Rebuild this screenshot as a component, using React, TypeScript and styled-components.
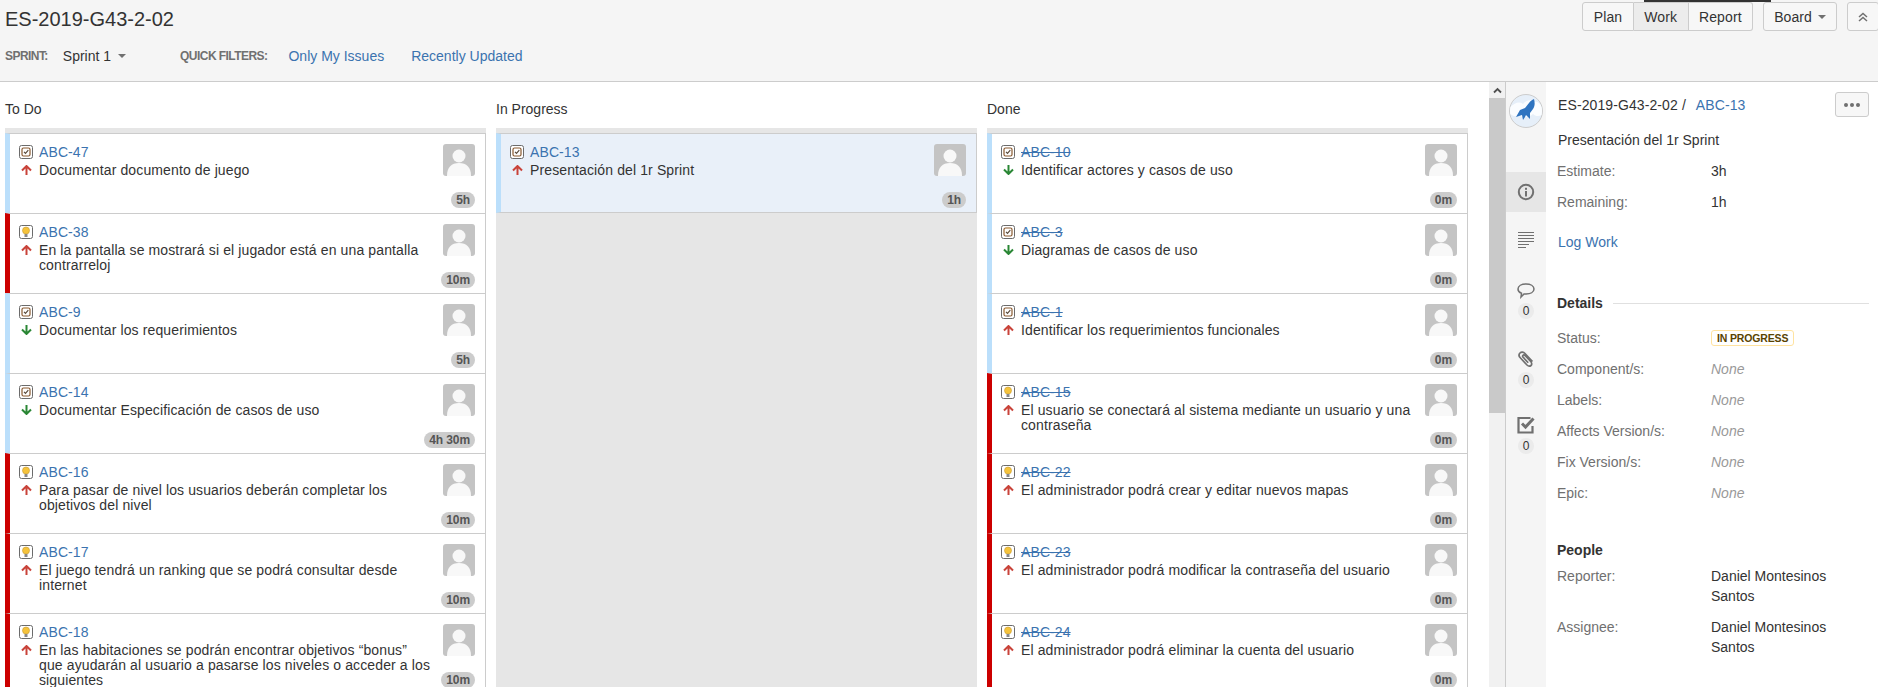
import React from "react";
import styled, { createGlobalStyle } from "styled-components";

const Global = createGlobalStyle`
  html, body { margin: 0; padding: 0; height: 100%; overflow: hidden; background: #fff; }
  body { font-family: "Liberation Sans", Arial, sans-serif; font-size: 14px; color: #333; }
  #root { height: 100%; }
`;

const Page = styled.div`
  height: 687px;
  display: flex;
  flex-direction: column;
  overflow: hidden;
`;
const Header = styled.header`
  height: 81px;
  flex: none;
  background: #f5f5f5;
  border-bottom: 1px solid #ccc;
  display: flex;
  flex-direction: column;
  padding-left: 5px;
`;
const TopRow = styled.div`
  height: 44px;
  display: flex;
  align-items: flex-start;
  justify-content: space-between;
`;
const Title = styled.h1`
  margin: 5px 0 0;
  font-size: 20px;
  line-height: 28px;
  font-weight: 400;
  color: #333;
`;
const Actions = styled.div`
  display: flex;
  gap: 10px;
  padding-top: 2px;
  margin-right: -1px;
`;
const Group = styled.div`
  position: relative;
  display: flex;
`;
const LoadingBar = styled.div`
  position: absolute;
  top: -2px;
  left: 62px;
  width: 127px;
  height: 2px;
  background: #333;
`;
const Btn = styled.button<{ $active?: boolean; $pos?: "l" | "m" | "r" | "s"; $pad?: number }>`
  height: 29px;
  box-sizing: border-box;
  padding: 0 ${(p) => p.$pad ?? 10.5}px;
  font: 14px "Liberation Sans", Arial, sans-serif;
  letter-spacing: 0.1px;
  color: #333;
  background: ${(p) => (p.$active ? "#ececec" : "#f7f7f7")};
  border: 1px solid #ccc;
  border-left-width: ${(p) => (p.$pos === "m" || p.$pos === "r" ? 0 : 1)}px;
  border-radius: ${(p) =>
    p.$pos === "l" ? "3px 0 0 3px" : p.$pos === "r" ? "0 3px 3px 0" : p.$pos === "m" ? "0" : "3px"};
  display: flex;
  align-items: center;
  gap: 6px;
`;
const Caret = styled.span`
  display: inline-block;
  width: 0;
  height: 0;
  border-left: 4px solid transparent;
  border-right: 4px solid transparent;
  border-top: 4px solid #707070;
`;
const FilterRow = styled.div`
  display: flex;
  align-items: center;
  height: 24px;
`;
const FilterLabel = styled.span<{ $left?: number }>`
  font-size: 12px;
  font-weight: 700;
  letter-spacing: -0.55px;
  color: #707070;
  margin-left: ${(p) => p.$left ?? 0}px;
`;
const SprintName = styled.span`
  margin-left: 15px;
  display: inline-flex;
  align-items: center;
  gap: 7px;
  color: #333;
`;
const FilterLink = styled.a<{ $left: number }>`
  color: #3b73af;
  margin-left: ${(p) => p.$left}px;
`;
const Body = styled.div`
  flex: 1;
  min-height: 0;
  display: flex;
`;
const Pool = styled.main`
  width: 1489px;
  flex: none;
  box-sizing: border-box;
  padding: 0 21px 0 5px;
  overflow: hidden;
`;
const ColumnHeads = styled.div`
  height: 46px;
  display: grid;
  grid-template-columns: repeat(3, 1fr);
  gap: 10px;
  align-items: start;
`;
const ColumnHead = styled.h2`
  margin: 18px 0 0;
  font-size: 14px;
  line-height: 18px;
  font-weight: 400;
  color: #333;
`;
const Columns = styled.div`
  display: grid;
  grid-template-columns: repeat(3, 1fr);
  gap: 10px;
  height: 560px;
`;
const Column = styled.section`
  background: #e6e6e6;
  padding-top: 5px;
`;
const CardBox = styled.article<{ $stripe: string; $selected?: boolean }>`
  height: 80px;
  box-sizing: border-box;
  display: flex;
  justify-content: space-between;
  background: ${(p) => (p.$selected ? "#e9f0f9" : "#fff")};
  border-top: 1px solid #ccc;
  border-right: 1px solid #ccc;
  border-bottom: ${(p) => (p.$selected ? "1px solid #ccc" : "0")};
  border-left: 5px solid ${(p) => p.$stripe};
  padding: 10px 10px ${(p) => (p.$selected ? 4 : 5)}px 9px;
`;
const CardMain = styled.div`
  flex: 1;
  min-width: 0;
`;
const KeyRow = styled.div`
  display: flex;
  align-items: center;
  gap: 6px;
  height: 16px;
`;
const KeyLink = styled.a<{ $done?: boolean }>`
  font-size: 14px;
  line-height: 16px;
  letter-spacing: 0.1px;
  color: #3b73af;
  text-decoration: ${(p) => (p.$done ? "line-through" : "none")};
`;
const SummaryRow = styled.div`
  display: flex;
  gap: 6px;
  margin-top: 3px;
`;
const ArrowBox = styled.span`
  width: 14px;
  flex: none;
  display: flex;
  justify-content: center;
  padding-top: 2px;
`;
const Summary = styled.p`
  margin: 0;
  font-size: 14px;
  line-height: 15px;
  letter-spacing: 0.12px;
  color: #333;
  max-width: 395px;
`;
const CardSide = styled.div`
  flex: none;
  width: 32px;
  display: flex;
  flex-direction: column;
  align-items: flex-end;
  justify-content: space-between;
`;
const Estimate = styled.span`
  height: 16px;
  line-height: 16px;
  padding: 0 5px;
  border-radius: 8px;
  background: #ccc;
  color: #555;
  font-size: 12px;
  font-weight: 700;
  text-align: center;
  white-space: nowrap;
  letter-spacing: -0.1px;
`;
const Gutter = styled.div`
  width: 16px;
  flex: none;
  background: #f1f1f1;
  border-right: 1px solid #ccc;
  display: flex;
  flex-direction: column;
`;
const ScrollUp = styled.div`
  height: 16px;
  display: flex;
  align-items: center;
  justify-content: center;
`;
const Thumb = styled.div`
  height: 315px;
  background: #c9c9c9;
`;
const SideNav = styled.nav`
  width: 40px;
  flex: none;
  background: #f5f5f5;
  display: flex;
  flex-direction: column;
  align-items: center;
  padding-top: 12px;
`;
const RocketBadge = styled.div`
  width: 34px;
  height: 34px;
  box-sizing: border-box;
  border-radius: 50%;
  border: 1px solid #ccc;
  background: #e6eff9;
  margin-bottom: 44px;
  overflow: hidden;
`;
const NavTab = styled.div<{ $active?: boolean; $h: number }>`
  width: 100%;
  height: ${(p) => p.$h}px;
  background: ${(p) => (p.$active ? "#e6e6e6" : "transparent")};
  display: flex;
  flex-direction: column;
  align-items: center;
  justify-content: ${(p) => (p.$active ? "center" : "flex-start")};
`;
const NavCount = styled.span`
  width: 16px;
  height: 16px;
  margin-top: 4px;
  line-height: 16px;
  border-radius: 50%;
  background: #ebebeb;
  color: #333;
  font-size: 12px;
  text-align: center;
`;
const Detail = styled.aside`
  flex: 1;
  min-width: 0;
  box-sizing: border-box;
  padding: 10px 9px 0 11px;
`;
const Crumbs = styled.div`
  display: flex;
  justify-content: space-between;
  align-items: center;
  height: 25px;
  padding-left: 1px;
  font-size: 14px;
  letter-spacing: 0.1px;
`;
const CrumbLink = styled.a`
  color: #3b73af;
  margin-left: 6px;
`;
const MoreBtn = styled.button`
  width: 34px;
  height: 25px;
  box-sizing: border-box;
  padding: 0;
  background: #f7f7f7;
  border: 1px solid #ccc;
  border-radius: 3px;
  display: flex;
  gap: 2px;
  align-items: center;
  justify-content: center;
`;
const Dot = styled.span`
  width: 4px;
  height: 4px;
  border-radius: 50%;
  background: #707070;
`;
const IssueName = styled.div`
  margin: 13px 0 0 1px;
  line-height: 20px;
`;
const Rows = styled.dl<{ $top: number }>`
  margin: ${(p) => p.$top}px 0 0;
  display: grid;
  grid-template-columns: 154px 1fr;
  row-gap: 11px;
  line-height: 20px;
`;
const Term = styled.dt`
  color: #707070;
`;
const Def = styled.dd<{ $none?: boolean }>`
  margin: 0;
  color: ${(p) => (p.$none ? "#999" : "#333")};
  font-style: ${(p) => (p.$none ? "italic" : "normal")};
  max-width: 125px;
`;
const LogLink = styled.a`
  display: block;
  margin: 20px 0 0 1px;
  line-height: 20px;
  color: #3b73af;
`;
const SectionHead = styled.div<{ $top: number }>`
  display: flex;
  align-items: center;
  gap: 10px;
  margin-top: ${(p) => p.$top}px;
  line-height: 20px;
  font-weight: 700;
  color: #333;
`;
const Rule = styled.span`
  flex: 1;
  height: 1px;
  background: #e0e0e0;
`;
const Lozenge = styled.span`
  display: inline-block;
  height: 16px;
  box-sizing: border-box;
  line-height: 14px;
  padding: 0 5px;
  border: 1px solid #ffe3a0;
  border-radius: 3px;
  color: #594300;
  font-size: 10.5px;
  font-weight: 700;
  letter-spacing: -0.15px;
  vertical-align: 1px;
`;

const TaskIcon = () => (
  <svg width="14" height="14" viewBox="0 0 14 14">
    <rect x="0.5" y="0.5" width="13" height="13" rx="2" fill="#fff" stroke="#6b6b6b" />
    <rect x="3" y="3" width="8" height="8" rx="1.5" fill="#fff" stroke="#8a5a30" strokeWidth="1.2" />
    <path d="M5 6.800l1.500 1.500L9.300 5.200" fill="none" stroke="#5a4a3a" strokeWidth="1.200" />
  </svg>
);
const IdeaIcon = () => (
  <svg width="14" height="14" viewBox="0 0 14 14">
    <rect x="0.5" y="0.5" width="13" height="13" rx="2" fill="#fff" stroke="#6b6b6b" />
    <circle cx="7" cy="5.500" r="3.500" fill="#f5c33c" stroke="#c89a30" strokeWidth="0.6" />
    <rect x="5.500" y="9" width="3" height="3" fill="#8a8a8a" />
  </svg>
);
const UpArrow = () => (
  <svg width="11" height="10" viewBox="0 0 11 10">
    <path d="M5.500 10V1.500M1 5.500l4.500-4.500 4.500 4.500" fill="none" stroke="#c9433a" strokeWidth="2" />
  </svg>
);
const DownArrow = () => (
  <svg width="11" height="10" viewBox="0 0 11 10">
    <path d="M5.500 0v8.500M1 4.500l4.500 4.500 4.500-4.500" fill="none" stroke="#2a8735" strokeWidth="2" />
  </svg>
);
const AvatarPic = () => (
  <svg width="32" height="32" viewBox="0 0 32 32" style={{ flex: "none" }}>
    <rect width="32" height="32" rx="3" fill="#c4c4c4" />
    <circle cx="16" cy="12" r="6.500" fill="#f8f8f8" />
    <path d="M4 32c0-9 4.500-13 12-13s12 4 12 13z" fill="#f8f8f8" />
  </svg>
);

type Item = { k: string; s: string; t: string; kind: "task" | "idea"; up: boolean };

const todo: Item[] = [
  { k: "ABC-47", s: "Documentar documento de juego", t: "5h", kind: "task", up: true },
  { k: "ABC-38", s: "En la pantalla se mostrará si el jugador está en una pantalla contrarreloj", t: "10m", kind: "idea", up: true },
  { k: "ABC-9", s: "Documentar los requerimientos", t: "5h", kind: "task", up: false },
  { k: "ABC-14", s: "Documentar Especificación de casos de uso", t: "4h 30m", kind: "task", up: false },
  { k: "ABC-16", s: "Para pasar de nivel los usuarios deberán completar los objetivos del nivel", t: "10m", kind: "idea", up: true },
  { k: "ABC-17", s: "El juego tendrá un ranking que se podrá consultar desde internet", t: "10m", kind: "idea", up: true },
  { k: "ABC-18", s: "En las habitaciones se podrán encontrar objetivos “bonus” que ayudarán al usuario a pasarse los niveles o acceder a los siguientes", t: "10m", kind: "idea", up: true },
];
const doing: Item[] = [
  { k: "ABC-13", s: "Presentación del 1r Sprint", t: "1h", kind: "task", up: true },
];
const done: Item[] = [
  { k: "ABC-10", s: "Identificar actores y casos de uso", t: "0m", kind: "task", up: false },
  { k: "ABC-3", s: "Diagramas de casos de uso", t: "0m", kind: "task", up: false },
  { k: "ABC-1", s: "Identificar los requerimientos funcionales", t: "0m", kind: "task", up: true },
  { k: "ABC-15", s: "El usuario se conectará al sistema mediante un usuario y una contraseña", t: "0m", kind: "idea", up: true },
  { k: "ABC-22", s: "El administrador podrá crear y editar nuevos mapas", t: "0m", kind: "idea", up: true },
  { k: "ABC-23", s: "El administrador podrá modificar la contraseña del usuario", t: "0m", kind: "idea", up: true },
  { k: "ABC-24", s: "El administrador podrá eliminar la cuenta del usuario", t: "0m", kind: "idea", up: true },
];

const Card = ({ item, isDone, selected }: { item: Item; isDone?: boolean; selected?: boolean }) => (
  <CardBox $stripe={item.kind === "idea" ? "#cc0000" : "#bbdffb"} $selected={selected}>
    <CardMain>
      <KeyRow>
        {item.kind === "idea" ? <IdeaIcon /> : <TaskIcon />}
        <KeyLink $done={isDone}>{item.k}</KeyLink>
      </KeyRow>
      <SummaryRow>
        <ArrowBox>{item.up ? <UpArrow /> : <DownArrow />}</ArrowBox>
        <Summary>{item.s}</Summary>
      </SummaryRow>
    </CardMain>
    <CardSide>
      <AvatarPic />
      <Estimate>{item.t}</Estimate>
    </CardSide>
  </CardBox>
);

export default function App() {
  return (
    <Page>
      <Global />
      <Header>
        <TopRow>
          <Title>ES-2019-G43-2-02</Title>
          <Actions>
            <Group>
              <LoadingBar />
              <Btn $pos="l">Plan</Btn>
              <Btn $pos="m" $active>Work</Btn>
              <Btn $pos="r">Report</Btn>
            </Group>
            <Btn $pos="s" $pad={10}>Board <Caret /></Btn>
            <Btn $pos="s" $pad={10}>
              <svg width="10" height="10" viewBox="0 0 10 10">
                <path d="M1 5l4-3.500L9 5M1 9l4-3.500L9 9" fill="none" stroke="#707070" strokeWidth="1.500" />
              </svg>
            </Btn>
          </Actions>
        </TopRow>
        <FilterRow>
          <FilterLabel>SPRINT:</FilterLabel>
          <SprintName>Sprint 1 <Caret /></SprintName>
          <FilterLabel $left={54}>QUICK FILTERS:</FilterLabel>
          <FilterLink $left={21}>Only My Issues</FilterLink>
          <FilterLink $left={27}>Recently Updated</FilterLink>
        </FilterRow>
      </Header>
      <Body>
        <Pool>
          <ColumnHeads>
            <ColumnHead>To Do</ColumnHead>
            <ColumnHead>In Progress</ColumnHead>
            <ColumnHead>Done</ColumnHead>
          </ColumnHeads>
          <Columns>
            <Column>{todo.map((i) => <Card key={i.k} item={i} />)}</Column>
            <Column>{doing.map((i) => <Card key={i.k} item={i} selected />)}</Column>
            <Column>{done.map((i) => <Card key={i.k} item={i} isDone />)}</Column>
          </Columns>
        </Pool>
        <Gutter>
          <ScrollUp>
            <svg width="9" height="7" viewBox="0 0 9 7">
              <path d="M1 5.500l3.500-3.500L8 5.500" fill="none" stroke="#505050" strokeWidth="1.800" />
            </svg>
          </ScrollUp>
          <Thumb />
        </Gutter>
        <SideNav>
          <RocketBadge>
            <svg width="32" height="32" viewBox="0 0 32 32">
              <path d="M0 12c5-4 9-6 13-3 3-4 8-5 11-2 3-1 6 1 8 5v8c-4 2-7 1-9-1-5 4-11 4-14 1-3 2-6 1-9-1z" fill="#fbfdff" />
              <path d="M24 4c1 4 1 7-1 10l-3 4v6l-4-4-1 2-2 3-1-5-6 2 4-7 5-2 4-5c1-2 3-3 5-4z" fill="#2f74c0" />
            </svg>
          </RocketBadge>
          <NavTab $active $h={40}>
            <svg width="18" height="18" viewBox="0 0 18 18">
              <circle cx="9" cy="9" r="7.200" fill="none" stroke="#707070" strokeWidth="2" />
              <rect x="8" y="8" width="2" height="5.500" fill="#707070" />
              <rect x="8" y="4.800" width="2" height="2" fill="#707070" />
            </svg>
          </NavTab>
          <NavTab $h={61}>
            <svg width="18" height="16" viewBox="0 0 18 16" style={{ marginTop: 20 }}>
              <path d="M1 .5h16M1 3.500h16M1 6.500h16M1 9.500h16M1 12.500h11M1 15.500h8" stroke="#707070" strokeWidth="1" />
            </svg>
          </NavTab>
          <NavTab $h={69}>
            <svg width="18" height="16" viewBox="0 0 18 16" style={{ marginTop: 10 }}>
              <path d="M9 1c4.400 0 8 1.900 8 5s-3.600 5-8 5H7l-3 3 .5-3.700C2.300 9.500 1 8 1 6c0-3.100 3.600-5 8-5z" fill="none" stroke="#707070" strokeWidth="1.500" />
            </svg>
            <NavCount>0</NavCount>
          </NavTab>
          <NavTab $h={68}>
            <svg width="18" height="18" viewBox="0 0 18 18" style={{ marginTop: 8 }}>
              <path d="M15.500 11.500L8 3.500C6.500 2 4.500 1.500 3 3s-1 3.500.5 5l6.500 7c1 1 2.800 1.500 4 .5s.7-3-.3-4L8 5.500C7.400 5 6.500 4.800 6 5.300s-.3 1.500.2 2l5 5.500" fill="none" stroke="#707070" strokeWidth="1.700" />
            </svg>
            <NavCount>0</NavCount>
          </NavTab>
          <NavTab $h={67}>
            <svg width="18" height="18" viewBox="0 0 18 18" style={{ marginTop: 6 }}>
              <path d="M15.500 10v6.500H1.500V2h12" fill="none" stroke="#707070" strokeWidth="2.200" />
              <path d="M5 7.500l3.500 3.500L16.500 2.500" fill="none" stroke="#707070" strokeWidth="3" />
            </svg>
            <NavCount>0</NavCount>
          </NavTab>
        </SideNav>
        <Detail>
          <Crumbs>
            <span>ES-2019-G43-2-02 / <CrumbLink>ABC-13</CrumbLink></span>
            <MoreBtn><Dot /><Dot /><Dot /></MoreBtn>
          </Crumbs>
          <IssueName>Presentación del 1r Sprint</IssueName>
          <Rows $top={11}>
            <Term>Estimate:</Term><Def>3h</Def>
            <Term>Remaining:</Term><Def>1h</Def>
          </Rows>
          <LogLink>Log Work</LogLink>
          <SectionHead $top={41}>Details<Rule /></SectionHead>
          <Rows $top={15}>
            <Term>Status:</Term><Def><Lozenge>IN PROGRESS</Lozenge></Def>
            <Term>Component/s:</Term><Def $none>None</Def>
            <Term>Labels:</Term><Def $none>None</Def>
            <Term>Affects Version/s:</Term><Def $none>None</Def>
            <Term>Fix Version/s:</Term><Def $none>None</Def>
            <Term>Epic:</Term><Def $none>None</Def>
          </Rows>
          <SectionHead $top={37}>People</SectionHead>
          <Rows $top={6}>
            <Term>Reporter:</Term><Def>Daniel Montesinos Santos</Def>
            <Term>Assignee:</Term><Def>Daniel Montesinos Santos</Def>
          </Rows>
        </Detail>
      </Body>
    </Page>
  );
}
